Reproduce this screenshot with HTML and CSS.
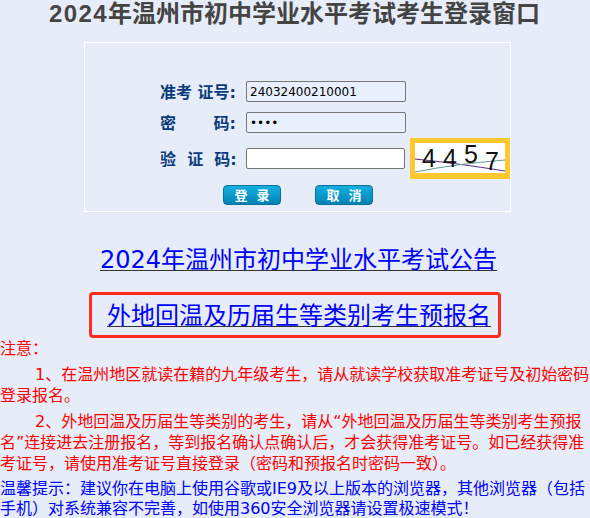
FILE: index.html
```html
<!DOCTYPE html>
<html lang="zh-CN">
<head>
    <meta charset="UTF-8">
    <link rel="stylesheet" href="styles.css">
    <title>考生登录窗口</title>
</head>
<body>
    <h1 class="page-title"><span class="title-year">2024</span>年温州市初中学业水平考试考生登录窗口</h1>

    <form class="login-panel">
        <div class="login-row">
            <label class="login-label" for="examNo">准考 证号:</label>
            <input class="login-input autofilled" type="text" id="examNo" value="24032400210001">
        </div>
        <div class="login-row">
            <label class="login-label" for="password">密&emsp;&emsp;&nbsp;码:</label>
            <input class="login-input autofilled" type="password" id="password" value="1234">
        </div>
        <div class="login-row captcha-row">
            <label class="login-label" for="captcha">验&nbsp;&nbsp;证&nbsp;&nbsp;码:</label>
            <input class="login-input" type="text" id="captcha">
            <div class="captcha-box">
                <svg class="captcha-img" viewBox="0 0 90 30" width="90" height="30">
                    <rect width="90" height="30" fill="#fff"/>
                    <path d="M0 16 Q40 20 90 28" fill="none" stroke="#5b2a8c" stroke-width="1"/>
                    <path d="M0 29 Q40 21 90 17" fill="none" stroke="#5f9a90" stroke-width="1"/>
                    <text class="captcha-digit" x="7" y="24">4</text>
                    <text class="captcha-digit" x="28" y="24">4</text>
                    <text class="captcha-digit" x="49" y="20">5</text>
                    <text class="captcha-digit" x="70" y="27">7</text>
                </svg>
            </div>
        </div>
        <div class="login-buttons">
            <button class="login-btn" type="button">登 录</button>
            <button class="login-btn" type="button">取 消</button>
        </div>
    </form>

    <div class="notice-link">
        <a href="#">2024年温州市初中学业水平考试公告</a>
    </div>
    <div class="signup-box">
        <a href="#">外地回温及历届生等类别考生预报名</a>
    </div>

    <div class="tips">
        <p class="tips-head">注意&#65306;</p>
        <p class="tips-item">1、在温州地区就读在籍的九年级考生&#65292;请从就读学校获取准考证号及初始密码登录报名。</p>
        <p class="tips-item">2、外地回温及历届生等类别的考生&#65292;请从“外地回温及历届生等类别考生预报名”连接进去注册报名&#65292;等到报名确认点确认后&#65292;才会获得准考证号。如已经获得准考证号&#65292;请使用准考证号直接登录&#65288;密码和预报名时密码一致&#65289;。</p>
        <p class="tips-warm">温馨提示&#65306;建议你在电脑上使用谷歌或IE9及以上版本的浏览器&#65292;其他浏览器&#65288;包括手机&#65289;对系统兼容不完善&#65292;如使用360安全浏览器请设置极速模式&#65281;</p>
    </div>
</body>
</html>
```

FILE: styles.css
```css
body {
    margin: 0;
    background-color: #e6ecf8;
    font-family: "DejaVu Sans", "Noto Sans CJK SC", sans-serif;
    font-size: 16px;
    overflow: hidden;
}

.page-title {
    margin: 0;
    height: 42px;
    padding-left: 49px;
    font-size: 24px;
    line-height: 28px;
    font-weight: bold;
    color: #444;
}

.title-year {
    font-family: "Liberation Sans", sans-serif;
    letter-spacing: 1.4px;
}

.login-panel {
    box-sizing: border-box;
    width: 427px;
    height: 170px;
    margin-left: 84px;
    padding-top: 38px;
    padding-left: 75px;
    border: 1px solid #fff;
}

.login-row {
    display: flex;
    align-items: center;
    height: 21px;
    margin-bottom: 10px;
}

.captcha-row {
    margin-top: 15px;
    margin-bottom: 16px;
}

.login-label {
    width: 86px;
    flex: none;
    padding-bottom: 2px;
    font-size: 16px;
    font-weight: bold;
    white-space: nowrap;
    color: #0a3b7c;
}

.login-input {
    box-sizing: border-box;
    width: 160px;
    height: 21px;
    margin: 0;
    padding: 0 3px;
    border: 1px solid #767676;
    border-radius: 2px;
    background-color: #fff;
    font-family: "DejaVu Sans", sans-serif;
    font-size: 12px;
    color: #000;
}

.autofilled {
    background-color: #e8f0fe;
}

.captcha-box {
    flex: none;
    width: 100px;
    height: 41px;
    box-sizing: border-box;
    margin-left: 5px;
    padding: 5px;
    background-color: #ffc82e;
}

.captcha-img {
    display: block;
    overflow: visible;
}

.captcha-digit {
    font-family: "Liberation Sans", sans-serif;
    font-size: 25px;
    fill: #111;
}

.login-buttons {
    display: flex;
    gap: 34px;
    padding-left: 63px;
}

.login-btn {
    width: 58px;
    height: 20px;
    padding: 0 0 0 3px;
    border: 1px solid #0d6f9c;
    border-radius: 4px;
    background: linear-gradient(#13b0e0, #0082b4);
    font-family: "Noto Sans CJK SC", sans-serif;
    font-size: 13px;
    font-weight: bold;
    line-height: 16px;
    letter-spacing: 3px;
    color: #fff;
}

.notice-link {
    margin-top: 29px;
    padding-left: 100px;
    font-size: 24px;
    line-height: 38px;
}

.signup-box {
    box-sizing: border-box;
    width: 412px;
    height: 46px;
    margin-top: 13px;
    margin-left: 89px;
    padding-left: 15px;
    border: 3px solid #ff2a1f;
    border-radius: 4px;
    font-size: 24px;
    line-height: 42px;
}

a {
    color: #0000ff;
    text-decoration-color: #333;
    text-decoration-thickness: 1px;
    text-underline-offset: 2px;
}

.tips {
    font-size: 16px;
    line-height: 21px;
    color: #ff0000;
}

.tips p {
    margin: 0;
}

.tips .tips-item {
    margin-top: 5px;
    text-indent: 35px;
}

.tips .tips-warm {
    margin-top: 5px;
    line-height: 20px;
    color: #0000ff;
}
```
